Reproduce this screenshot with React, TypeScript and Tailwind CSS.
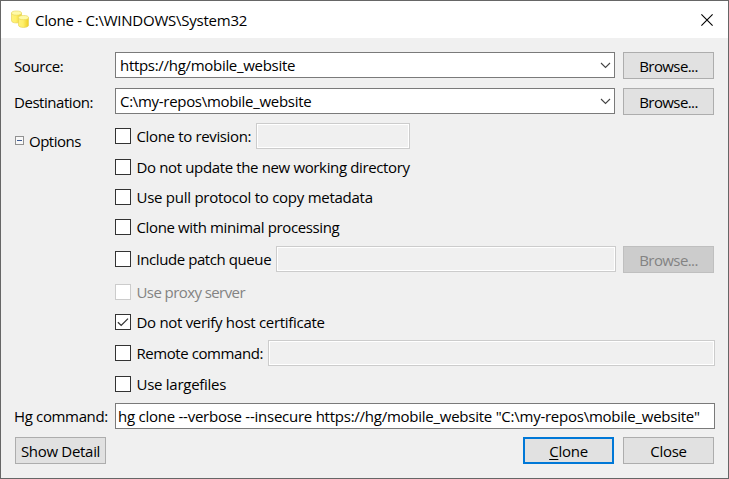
import type { ReactNode } from "react";

function Label({ children, className = "" }: { children: ReactNode; className?: string }) {
  return <span className={`block leading-5 whitespace-pre ${className}`}>{children}</span>;
}

function Check({ checked = false, disabled = false }: { checked?: boolean; disabled?: boolean }) {
  return (
    <span className={`flex size-4 shrink-0 items-center justify-center border bg-white ${disabled ? "border-[#cccccc]" : "border-[#333333]"}`}>
      {checked && (
        <svg width="14" height="14" viewBox="0 0 14 14" fill="none" stroke="#333333" strokeWidth="1.3">
          <path d="M1.9 7.2 5.2 10.4 12 3.6" />
        </svg>
      )}
    </span>
  );
}

function Option({ text, tracking, checked, disabled, className = "ml-[100px]" }: {
  text: string; tracking: string; checked?: boolean; disabled?: boolean; className?: string;
}) {
  return (
    <div className={`flex items-center ${className}`}>
      <Check checked={checked} disabled={disabled} />
      <Label className={`ml-[5.5px] ${tracking} ${disabled ? "text-[#838383]" : ""}`}>{text}</Label>
    </div>
  );
}

function Button({ children, kind = "normal", className = "" }: { children: ReactNode; kind?: "normal" | "primary" | "disabled"; className?: string }) {
  const look =
    kind === "primary"
      ? "border-2 border-[#0078d7] bg-[#e1e1e1]"
      : kind === "disabled"
        ? "border border-[#bfbfbf] bg-[#cccccc] text-[#838383]"
        : "border border-[#adadad] bg-[#e1e1e1]";
  return (
    <button className={`flex h-[27px] w-[91px] shrink-0 items-center justify-center ${look} ${className}`}>
      <Label>{children}</Label>
    </button>
  );
}

function Combo({ text }: { text: string }) {
  return (
    <div className="flex h-[26px] w-[500px] items-center justify-between border border-[#7a7a7a] bg-white pr-[3px] pl-1">
      <Label className="tracking-[-0.3px]">{text}</Label>
      <svg width="11" height="7" viewBox="0 0 11 7" fill="none" stroke="#444444" strokeWidth="1.1">
        <path d="M1 1 5.5 5.5 10 1" />
      </svg>
    </div>
  );
}

function DisabledField({ className }: { className: string }) {
  return <div className={`h-[26px] shrink-0 border border-[#cccccc] bg-[#f0f0f0] shadow-[inset_0_0_0_1px_#ffffff] ${className}`} />;
}

function Drum({ x, y }: { x: number; y: number }) {
  return (
    <g transform={`translate(${x} ${y})`}>
      <path d="M.5 2.6V10.2C.5 13.2 10.5 13.2 10.5 10.2V2.6Z" fill="url(#drum)" stroke="#e8d45b" strokeWidth=".7" />
      <ellipse cx="5.5" cy="2.6" rx="5" ry="2.1" fill="#fffaa8" stroke="#e8d760" strokeWidth=".7" />
    </g>
  );
}

export default function App() {
  return (
    <div className="h-[479px] w-[729px] overflow-hidden border border-[#666666] bg-[#f0f0f0] font-['Open_Sans','Noto_Sans',sans-serif] text-[15px] text-black">
      <header className="flex h-[37px] items-center bg-white pr-[15px] pl-[10px]">
        <svg width="19" height="19" viewBox="0 0 19 19">
          <defs>
            <linearGradient id="drum">
              <stop stopColor="#fff27a" />
              <stop offset=".45" stopColor="#fff06a" />
              <stop offset="1" stopColor="#efce22" />
            </linearGradient>
          </defs>
          <Drum x={0} y={0.5} />
          <Drum x={7} y={5} />
        </svg>
        <Label className="ml-[5px] grow tracking-[-0.24px]">{"Clone - C:\\WINDOWS\\System32"}</Label>
        <svg width="12" height="12" viewBox="0 0 12 12" fill="none" stroke="#000000" strokeWidth="1.1">
          <path d="M.4.4l11.2 11.2M11.6.4l-11.2 11.2" />
        </svg>
      </header>

      <main className="flex flex-col pt-[14px] pl-[14px]">
        <div className="flex items-start">
          <Label className="-ml-px w-[101px] pt-[4px] tracking-[-0.4px]">Source:</Label>
          <Combo text="https://hg/mobile_website" />
          <Button className="ml-2 tracking-[-0.6px]">Browse...</Button>
        </div>
        <div className="mt-[9px] flex h-[27px] items-start">
          <Label className="-ml-px w-[101px] pt-[4px] tracking-[-0.45px]">Destination:</Label>
          <Combo text={"C:\\my-repos\\mobile_website"} />
          <Button className="ml-2 tracking-[-0.6px]">Browse...</Button>
        </div>

        <div className="mt-2 flex h-[26px] items-center">
          <div className="flex w-[100px] items-center pt-[10px]">
            <svg width="9" height="9" viewBox="0 0 9 9" className="mb-[2px]">
              <rect x=".5" y=".5" width="8" height="8" fill="#f8f8f8" stroke="#919191" />
              <path d="M2 4.5h5" stroke="#3c5a94" />
            </svg>
            <Label className="ml-[5px] tracking-[-0.5px]">Options</Label>
          </div>
          <Option text="Clone to revision:" tracking="tracking-[-0.35px]" className="w-[141px]" />
          <DisabledField className="w-[154px]" />
        </div>
        <Option className="mt-[10px] ml-[100px] h-4" text="Do not update the new working directory" tracking="tracking-[-0.36px]" />
        <Option className="mt-[14px] ml-[100px] h-4" text="Use pull protocol to copy metadata" tracking="tracking-[-0.26px]" />
        <Option className="mt-[14px] ml-[100px] h-4" text="Clone with minimal processing" tracking="tracking-[-0.37px]" />
        <div className="mt-[11px] flex h-[27px] items-start">
          <div className="flex h-[26px] w-[261px] items-center">
            <Option text="Include patch queue" tracking="tracking-[-0.42px]" />
          </div>
          <DisabledField className="w-[340px]" />
          <Button kind="disabled" className="ml-[7px] tracking-[-0.6px]">Browse...</Button>
        </div>
        <Option className="mt-[11px] ml-[100px] h-4" text="Use proxy server" tracking="tracking-[-0.58px]" disabled />
        <Option className="mt-[14px] ml-[100px] h-4" text="Do not verify host certificate" tracking="tracking-[-0.3px]" checked />
        <div className="mt-[10px] flex h-[26px] items-center">
          <div className="w-[253px] shrink-0">
            <Option text="Remote command:" tracking="tracking-[-0.43px]" />
          </div>
          <DisabledField className="w-[447px]" />
        </div>
        <Option className="mt-[10px] ml-[100px] h-4" text="Use largefiles" tracking="tracking-[-0.27px]" />
        <div className="mt-[11px] flex h-[26px] items-center">
          <Label className="-ml-px w-[101px] tracking-[-0.35px]">Hg command:</Label>
          <div className="flex h-[26px] w-[600px] items-center border border-[#7a7a7a] bg-white pl-[2px]">
            <Label className="tracking-[-0.25px]">{"hg clone --verbose --insecure https://hg/mobile_website \"C:\\my-repos\\mobile_website\""}</Label>
          </div>
        </div>
        <footer className="mt-2 flex">
          <Button className="tracking-[-0.3px]">Show Detail</Button>
          <Button kind="primary" className="ml-[417px] tracking-[-0.25px]"><span className="underline underline-offset-2">C</span>lone</Button>
          <Button className="ml-[9px] tracking-[-0.25px]">Close</Button>
        </footer>
      </main>
    </div>
  );
}
